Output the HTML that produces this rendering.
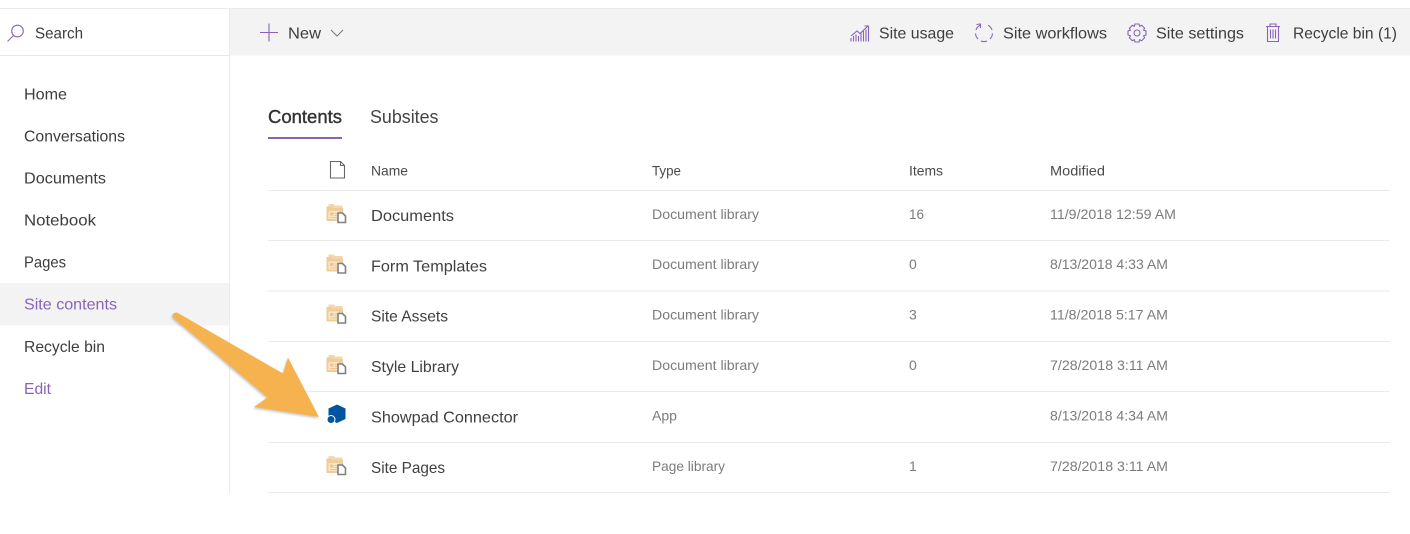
<!DOCTYPE html>
<html><head><meta charset="utf-8"><style>
html,body{margin:0;padding:0;background:#fff;width:1410px;height:534px;overflow:hidden}
svg{display:block;font-family:"Liberation Sans",sans-serif}
.n{font-size:16px;fill:#3d3d3d}
.h{font-size:14px;fill:#4a4a4a}
.t{font-size:14px;fill:#7c7c7c}
.r{font-size:16px;fill:#404040}
.p{fill:none;stroke:#8764b8;stroke-width:1.1}
</style></head><body>
<svg width="1410" height="534" viewBox="0 0 1410 534">
<defs>
<g id="lib">
<path d="M2 0h5l1.500 1.500H16V4H2z" fill="#f3d7ae"/>
<path d="M0 2.500h5l1.500 1.500H16.500V15H13.500V17H0z" fill="#f0cc98"/>
<path d="M2 7h10.500V15H2z" fill="#f8e6cc"/>
<path d="M3.500 8.500h3.500v3H3.500z" fill="#eec68d"/>
<path d="M8 9.500h3.500M8 11.500h3.500M3.500 13.500h8" stroke="#eec68d" stroke-width="1"/>
<path d="M11.500 9h4.500l3 3v6.500h-7.500z" fill="#fff" stroke="#808080" stroke-width="1.600"/>
</g>
<filter id="sh" x="-10%" y="-10%" width="120%" height="120%"><feDropShadow dx="-1" dy="1.500" stdDeviation="1" flood-color="#777" flood-opacity=".4"/></filter>
</defs>

<rect x="0" y="8" width="1410" height="1" fill="#ebebeb"/>
<rect x="230" y="9" width="1180" height="46.500" fill="#f3f3f3"/>
<rect x="0" y="55" width="230" height="1" fill="#e8e8e8"/>
<rect x="229" y="9" width="1" height="484" fill="#ececec"/>
<rect x="0" y="283" width="229" height="42.500" fill="#f3f3f3"/>

<!-- search -->
<circle cx="17.500" cy="31" r="5.800" class="p"/>
<path d="M13.500 35.500L7.500 41.500" class="p"/>
<text x="35" y="38.500" class="n" textLength="48" lengthAdjust="spacingAndGlyphs">Search</text>

<!-- nav -->
<text x="24" y="99.500" class="n" textLength="43" lengthAdjust="spacingAndGlyphs">Home</text>
<text x="24" y="141.500" class="n" textLength="101" lengthAdjust="spacingAndGlyphs">Conversations</text>
<text x="24" y="183.500" class="n" textLength="82" lengthAdjust="spacingAndGlyphs">Documents</text>
<text x="24" y="225.500" class="n" textLength="72" lengthAdjust="spacingAndGlyphs">Notebook</text>
<text x="24" y="267.500" class="n" textLength="42" lengthAdjust="spacingAndGlyphs">Pages</text>
<text x="24" y="309.500" class="n" style="fill:#8764b8" textLength="93" lengthAdjust="spacingAndGlyphs">Site contents</text>
<text x="24" y="352" class="n" textLength="81" lengthAdjust="spacingAndGlyphs">Recycle bin</text>
<text x="24" y="394" class="n" style="fill:#8764b8" textLength="27" lengthAdjust="spacingAndGlyphs">Edit</text>

<!-- command bar -->
<path d="M269 23.500V41.500M260 32.500H278" class="p"/>
<text x="288" y="38.500" class="n" textLength="33" lengthAdjust="spacingAndGlyphs">New</text>
<path d="M331 30l6 6 6-6" fill="none" stroke="#777" stroke-width="1"/>

<path d="M851 41.500V38M853.500 41.500V36M856 41.500V34.500M858.500 41.500V36M861 41.500V32.500M863.500 41.500V31M866 41.500V29.500M868.500 41.500V28" class="p"/>
<path d="M851 36l6-5 3 2.500 8-7.500M864.500 26h4v4" class="p"/>
<text x="879" y="38.500" class="n" textLength="75" lengthAdjust="spacingAndGlyphs">Site usage</text>

<path d="M980 25.200A8.500 8.500 0 0 0 976 30M975.500 33.500A8.500 8.500 0 0 0 978 39M981 41A8.500 8.500 0 0 0 987 41M990 39A8.500 8.500 0 0 0 992.500 33.500M992 30A8.500 8.500 0 0 0 988 25.200" class="p"/>
<path d="M976.500 24.500L980.500 24V28" class="p"/>
<text x="1003" y="38.500" class="n" textLength="104" lengthAdjust="spacingAndGlyphs">Site workflows</text>

<circle cx="1137" cy="33" r="3" class="p"/>
<path d="M1135 24h4l.7 2.300 2-1 2.900 2.900-1 2 2.400.8v4l-2.400.8 1 2-2.900 2.900-2-1-.7 2.300h-4l-.7-2.300-2 1-2.900-2.900 1-2-2.400-.8v-4l2.400-.8-1-2 2.900-2.900 2 1z" class="p"/>
<text x="1156" y="38.500" class="n" textLength="88" lengthAdjust="spacingAndGlyphs">Site settings</text>

<path d="M1266 26.500H1280M1270 26.500V24h6v2.500M1267.500 26.500V41.500H1278.500V26.500M1270.500 29.500V38.500M1273 29.500V38.500M1275.500 29.500V38.500" class="p"/>
<text x="1293" y="38.500" class="n" textLength="104" lengthAdjust="spacingAndGlyphs">Recycle bin (1)</text>

<!-- tabs -->
<text x="268" y="123" style="font-size:18.500px;fill:#333;stroke:#333;stroke-width:.4" textLength="74" lengthAdjust="spacingAndGlyphs">Contents</text>
<rect x="268" y="137" width="74" height="2" fill="#8764b8"/>
<text x="370" y="123" style="font-size:18.500px;fill:#444" textLength="68.500" lengthAdjust="spacingAndGlyphs">Subsites</text>

<!-- header -->
<path d="M330.500 161.500h10l4 4v12.500h-14z M340.500 161.500v4h4" fill="#fff" stroke="#666" stroke-width="1.100"/>
<text x="371" y="175.500" class="h" textLength="37" lengthAdjust="spacingAndGlyphs">Name</text>
<text x="652" y="175.500" class="h" textLength="29" lengthAdjust="spacingAndGlyphs">Type</text>
<text x="909" y="175.500" class="h" textLength="34" lengthAdjust="spacingAndGlyphs">Items</text>
<text x="1050" y="175.500" class="h" textLength="55" lengthAdjust="spacingAndGlyphs">Modified</text>

<g fill="#ebebeb">
<rect x="268" y="190" width="1122" height="1"/>
<rect x="268" y="240" width="1122" height="1"/>
<rect x="268" y="290.500" width="1122" height="1"/>
<rect x="268" y="341" width="1122" height="1"/>
<rect x="268" y="391" width="1122" height="1"/>
<rect x="268" y="442" width="1122" height="1"/>
<rect x="268" y="492" width="1122" height="1"/>
</g>

<!-- rows -->
<use href="#lib" x="326.500" y="204"/>
<text x="371" y="221" class="r" textLength="83" lengthAdjust="spacingAndGlyphs">Documents</text>
<text x="652" y="219" class="t" textLength="107" lengthAdjust="spacingAndGlyphs">Document library</text>
<text x="909" y="219" class="t" textLength="15" lengthAdjust="spacingAndGlyphs">16</text>
<text x="1050" y="219" class="t" textLength="126" lengthAdjust="spacingAndGlyphs">11/9/2018 12:59 AM</text>

<use href="#lib" x="326.500" y="254.500"/>
<text x="371" y="271.500" class="r" textLength="116" lengthAdjust="spacingAndGlyphs">Form Templates</text>
<text x="652" y="269" class="t" textLength="107" lengthAdjust="spacingAndGlyphs">Document library</text>
<text x="909" y="269" class="t">0</text>
<text x="1050" y="269" class="t" textLength="118" lengthAdjust="spacingAndGlyphs">8/13/2018 4:33 AM</text>

<use href="#lib" x="326.500" y="304.500"/>
<text x="371" y="321.500" class="r" textLength="77" lengthAdjust="spacingAndGlyphs">Site Assets</text>
<text x="652" y="319.500" class="t" textLength="107" lengthAdjust="spacingAndGlyphs">Document library</text>
<text x="909" y="319.500" class="t">3</text>
<text x="1050" y="319.500" class="t" textLength="118" lengthAdjust="spacingAndGlyphs">11/8/2018 5:17 AM</text>

<use href="#lib" x="326.500" y="355"/>
<text x="371" y="372" class="r" textLength="88" lengthAdjust="spacingAndGlyphs">Style Library</text>
<text x="652" y="370" class="t" textLength="107" lengthAdjust="spacingAndGlyphs">Document library</text>
<text x="909" y="370" class="t">0</text>
<text x="1050" y="370" class="t" textLength="118" lengthAdjust="spacingAndGlyphs">7/28/2018 3:11 AM</text>

<path d="M337 404.500l8.500 4v10.500l-8.500 4-8.500-4v-10.500z" fill="#00559f"/>
<circle cx="331" cy="419.500" r="4" fill="#00559f" stroke="#fff" stroke-width="1"/>
<text x="371" y="422.500" class="r" textLength="147" lengthAdjust="spacingAndGlyphs">Showpad Connector</text>
<text x="652" y="420.500" class="t" textLength="25" lengthAdjust="spacingAndGlyphs">App</text>
<text x="1050" y="420.500" class="t" textLength="118" lengthAdjust="spacingAndGlyphs">8/13/2018 4:34 AM</text>

<use href="#lib" x="326.500" y="456"/>
<text x="371" y="473" class="r" textLength="74" lengthAdjust="spacingAndGlyphs">Site Pages</text>
<text x="652" y="471" class="t" textLength="73" lengthAdjust="spacingAndGlyphs">Page library</text>
<text x="909" y="471" class="t">1</text>
<text x="1050" y="471" class="t" textLength="118" lengthAdjust="spacingAndGlyphs">7/28/2018 3:11 AM</text>

<!-- arrow -->
<path d="M177 312.500L283 373.500 288 357.500 319 417 254 407 267.500 397.500 173.500 318Q170.500 313 177 312.500z" fill="#f5b24f" filter="url(#sh)"/>
</svg>
</body></html>
